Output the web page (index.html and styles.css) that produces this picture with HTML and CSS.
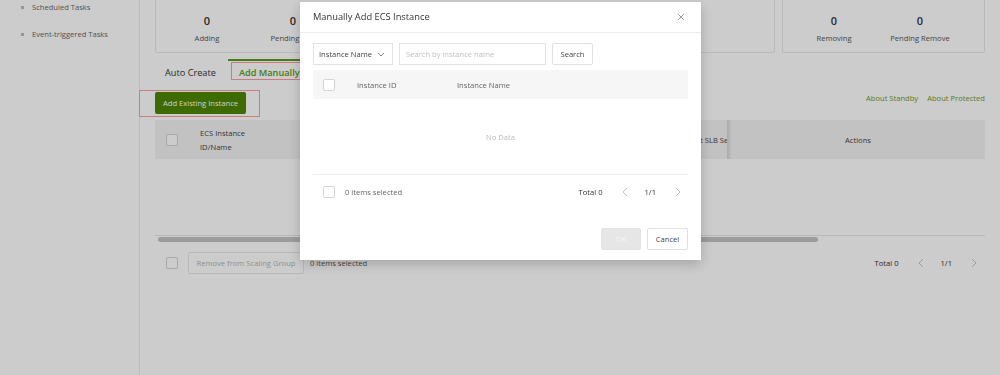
FILE: index.html
```html
<!DOCTYPE html>
<html lang="en">
<head>
    <meta charset="UTF-8">
    <meta name="viewport" content="width=device-width, initial-scale=1.0">
    <title>Scaling Group - ECS Instances</title>
    <link rel="stylesheet" href="styles.css">
</head>
<body>

    <div class="page">
        <aside class="sidebar">
            <ul class="side-menu">
                <li>Scheduled Tasks</li>
                <li>Event-triggered Tasks</li>
            </ul>
        </aside>

        <main class="main">
            <div class="stats">
                <div class="stat-card wide">
                    <div class="stat"><b>0</b><span>Adding</span></div>
                    <div class="stat"><b>0</b><span>Pending Add</span></div>
                    <div class="stat"><b>0</b><span>In Service</span></div>
                    <div class="stat"><b>0</b><span>Standby</span></div>
                    <div class="stat"><b>0</b><span>Protected</span></div>
                    <div class="stat"><b>0</b><span>Disabled</span></div>
                </div>
                <div class="stat-card">
                    <div class="stat"><b>0</b><span>Removing</span></div>
                    <div class="stat"><b>0</b><span>Pending Remove</span></div>
                </div>
            </div>

            <div class="tabs">
                <div class="tab first">Auto Create</div>
                <div class="tab active"><span class="mark mark-tab">Add Manually</span></div>
            </div>

            <div class="toolbar">
                <button class="btn-primary mark mark-btn">Add Existing Instance</button>
                <div class="links">
                    <a>About Standby</a>
                    <a>About Protected</a>
                </div>
            </div>

            <div class="table">
                <div class="thead">
                    <div class="col col-check"><span class="checkbox"></span></div>
                    <div class="col col-name">ECS Instance<br>ID/Name</div>
                    <div class="col col-mid">Status</div>
                    <div class="col col-mid">Health Status</div>
                    <div class="col col-mid wide">Instance Type</div>
                    <div class="col col-slb">Default SLB Server Group</div>
                    <div class="col col-shadow"></div>
                    <div class="col col-actions">Actions</div>
                </div>
                <div class="tbody"></div>
                <div class="scrollbar"><div class="thumb"></div></div>
            </div>

            <div class="table-footer">
                <div class="batch">
                    <span class="checkbox"></span>
                    <button class="btn-disabled">Remove from Scaling Group</button>
                    <span class="selected">0 items selected</span>
                </div>
                <div class="pager">
                    <span class="total">Total 0</span>
                    <svg class="chev prev" width="6" height="10" viewBox="0 0 6 10"><polyline points="5,1 1,5 5,9" fill="none" stroke="#c4c4c4" stroke-width="1"/></svg>
                    <span class="pages">1/1</span>
                    <svg class="chev next" width="6" height="10" viewBox="0 0 6 10"><polyline points="1,1 5,5 1,9" fill="none" stroke="#c4c4c4" stroke-width="1"/></svg>
                </div>
            </div>
        </main>
    </div>

    <div class="mask"></div>

    <div class="modal">
        <div class="modal-header">
            <span class="modal-title">Manually Add ECS Instance</span>
            <svg class="close" width="8" height="8" viewBox="0 0 8 8"><path d="M1 1 L7 7 M7 1 L1 7" stroke="#9a9a9a" stroke-width="1" fill="none"/></svg>
        </div>
        <div class="modal-body">
            <div class="search-row">
                <div class="select">
                    <span>Instance Name</span>
                    <svg width="8" height="5" viewBox="0 0 8 5"><polyline points="1,1 4,4 7,1" fill="none" stroke="#888" stroke-width="1"/></svg>
                </div>
                <input class="search-input" type="text" placeholder="Search by instance name">
                <button class="btn-default search-btn">Search</button>
            </div>

            <div class="m-table">
                <div class="m-thead">
                    <div class="m-col m-check"><span class="checkbox"></span></div>
                    <div class="m-col m-id">Instance ID</div>
                    <div class="m-col">Instance Name</div>
                </div>
                <div class="m-empty">No Data</div>
            </div>

            <div class="m-footer">
                <div class="batch">
                    <span class="checkbox"></span>
                    <span class="selected">0 items selected</span>
                </div>
                <div class="pager">
                    <span class="total">Total 0</span>
                    <svg class="chev prev" width="6" height="10" viewBox="0 0 6 10"><polyline points="5,1 1,5 5,9" fill="none" stroke="#c4c4c4" stroke-width="1"/></svg>
                    <span class="pages">1/1</span>
                    <svg class="chev next" width="6" height="10" viewBox="0 0 6 10"><polyline points="1,1 5,5 1,9" fill="none" stroke="#c4c4c4" stroke-width="1"/></svg>
                </div>
            </div>

            <div class="modal-actions">
                <button class="btn-ok">OK</button>
                <button class="btn-default">Cancel</button>
            </div>
        </div>
    </div>

</body>
</html>
```

FILE: styles.css
```css
* {
    margin: 0;
    padding: 0;
    box-sizing: border-box;
}

html, body {
    height: 100%;
    overflow: hidden;
}

body {
    font-family: "Open Sans", "Noto Sans", sans-serif;
    font-size: 7.6px;
    color: #333;
    background-color: white;
}

button, input {
    font-family: inherit;
    font-size: inherit;
}

.page {
    display: flex;
    height: 100%;
}

/* sidebar */
.sidebar {
    width: 140px;
    flex-shrink: 0;
    border-right: 1px solid #ececec;
}

.side-menu {
    list-style: none;
    margin-top: -6px;
    padding-left: 21px;
}

.side-menu li {
    display: flex;
    align-items: center;
    line-height: 27px;
    color: #666;
}

.side-menu li::before {
    content: "";
    width: 3px;
    height: 3px;
    background-color: #bbb;
    margin-right: 8px;
}

/* main area */
.main {
    flex: 1;
    padding: 0 15px;
}

.stats {
    display: flex;
    gap: 7px;
    margin-top: -8px;
}

.stat-card {
    display: flex;
    width: 203px;
    height: 61px;
    padding: 21px 0 0 8px;
    border: 1px solid #e8e8e8;
    border-radius: 2px;
}

.stat-card.wide {
    width: 620px;
}

.stat {
    width: 86px;
    text-align: center;
}

.stat b {
    display: block;
    font-size: 11px;
    font-weight: 600;
    line-height: 14px;
}

.stat span {
    display: block;
    line-height: 12px;
    margin-top: 4px;
    color: #555;
}

.tabs {
    display: flex;
    margin-top: 6px;
}

.tab {
    font-size: 9.2px;
    line-height: 14px;
    padding: 5px 12px 7px 11px;
    border-top: 2px solid transparent;
    color: #333;
}

.tab.first {
    padding-left: 10px;
}

.tab.active {
    border-top-color: #5c9a1c;
    color: #5c9a1c;
    font-weight: 600;
}

.mark {
    position: relative;
}

.mark::after {
    content: "";
    position: absolute;
    border: 1px solid #ff9c9c;
}

.mark-tab::after {
    inset: -4px -4px -1px -8px;
}

.mark-btn::after {
    inset: -2px -14px -3px -16px;
}

.toolbar {
    display: flex;
    justify-content: space-between;
    align-items: flex-start;
    margin-top: 5px;
}

.btn-primary {
    height: 22px;
    padding: 0 8px;
    background-color: #4e8600;
    color: white;
    border: none;
    border-radius: 2px;
}

.links {
    display: flex;
    gap: 9px;
    line-height: 12px;
}

.links a {
    color: #6e9a2c;
}

.table {
    margin-top: 6px;
}

.thead {
    display: flex;
    height: 39px;
    background-color: #f3f3f3;
    line-height: 14px;
}

.col {
    display: flex;
    align-items: center;
    padding-left: 10px;
    color: #444;
}

.col-check {
    width: 35px;
    padding-left: 11px;
}

.col-name {
    width: 110px;
}

.col-mid {
    width: 120px;
}

.col-mid.wide {
    width: 127px;
}

.col-slb {
    width: 60px;
    white-space: nowrap;
    overflow: hidden;
}

.col-shadow {
    width: 4px;
    padding: 0;
    background: linear-gradient(to right, #d6d6d6, #ececec);
}

.col-actions {
    flex: 1;
    justify-content: center;
    padding: 0;
}

.tbody {
    height: 77px;
    border-bottom: 1px solid #e6e6e6;
}

.scrollbar {
    margin-top: 1px;
    height: 5px;
}

.thumb {
    width: 660px;
    height: 5px;
    margin-left: 3px;
    border-radius: 3px;
    background-color: #c4c4c4;
}

.checkbox {
    display: inline-block;
    width: 12px;
    height: 12px;
    border: 1px solid #d4d4d4;
    border-radius: 2px;
    background-color: white;
    flex-shrink: 0;
}

.table-footer {
    display: flex;
    justify-content: space-between;
    align-items: center;
    margin-top: 10px;
    height: 22px;
}

.batch {
    display: flex;
    align-items: center;
}

.table-footer .batch {
    padding-left: 11px;
}

.btn-disabled {
    height: 22px;
    width: 116px;
    margin-left: 10px;
    background-color: white;
    color: #b5b5b5;
    border: 1px solid #e6e6e6;
    border-radius: 2px;
}

.table-footer .selected {
    margin-left: 6px;
    color: #555;
}

.pager {
    display: flex;
    align-items: center;
}

.pager .prev {
    margin-left: 19px;
}

.pager .pages {
    margin-left: 17px;
}

.pager .next {
    margin-left: 19px;
    margin-right: 8px;
}

/* overlay + dialog */
.mask {
    position: fixed;
    inset: 0;
    background-color: rgba(0, 0, 0, 0.2);
}

.modal {
    position: fixed;
    left: 300px;
    top: 2px;
    width: 401px;
    background-color: white;
    box-shadow: 0px 4px 12px rgba(0, 0, 0, 0.2);
}

.modal-header {
    display: flex;
    justify-content: space-between;
    align-items: center;
    height: 31px;
    padding: 0 16px 1px 13px;
    border-bottom: 1px solid #ededed;
}

.modal-title {
    font-size: 9.3px;
    font-weight: 500;
    color: #333;
}

.modal-body {
    padding: 10px 13px 10px;
}

.search-row {
    display: flex;
    gap: 6px;
    height: 22px;
}

.select {
    display: flex;
    justify-content: space-between;
    align-items: center;
    width: 80px;
    padding: 0 7px 0 5px;
    border: 1px solid #e2e2e2;
    color: #444;
}

.search-input {
    width: 147px;
    padding: 0 6px;
    border: 1px solid #e2e2e2;
    outline: none;
}

.search-input::placeholder {
    color: #c0c0c0;
}

.btn-default {
    width: 41px;
    height: 22px;
    background-color: white;
    color: #444;
    border: 1px solid #e0e0e0;
    border-radius: 2px;
}

.m-table {
    margin-top: 5px;
}

.m-thead {
    display: flex;
    align-items: center;
    height: 29px;
    background-color: #f6f6f6;
    color: #666;
}

.m-check {
    width: 44px;
    padding-left: 10px;
    display: flex;
}

.m-id {
    width: 100px;
}

.m-empty {
    height: 76px;
    display: flex;
    align-items: center;
    justify-content: center;
    border-bottom: 1px solid #efefef;
    color: #bbb;
}

.m-footer {
    display: flex;
    justify-content: space-between;
    align-items: center;
    height: 33px;
}

.m-footer .batch {
    padding-left: 10px;
}

.m-footer .selected {
    margin-left: 10px;
    color: #666;
}

.m-footer .pager .next {
    margin-right: 7px;
}

.modal-actions {
    display: flex;
    justify-content: flex-end;
    gap: 6px;
    margin-top: 20px;
}

.btn-ok {
    width: 40px;
    height: 22px;
    background-color: #e6e6e6;
    color: #f8f8f8;
    border: 1px solid #e2e2e2;
    border-radius: 2px;
}
```
